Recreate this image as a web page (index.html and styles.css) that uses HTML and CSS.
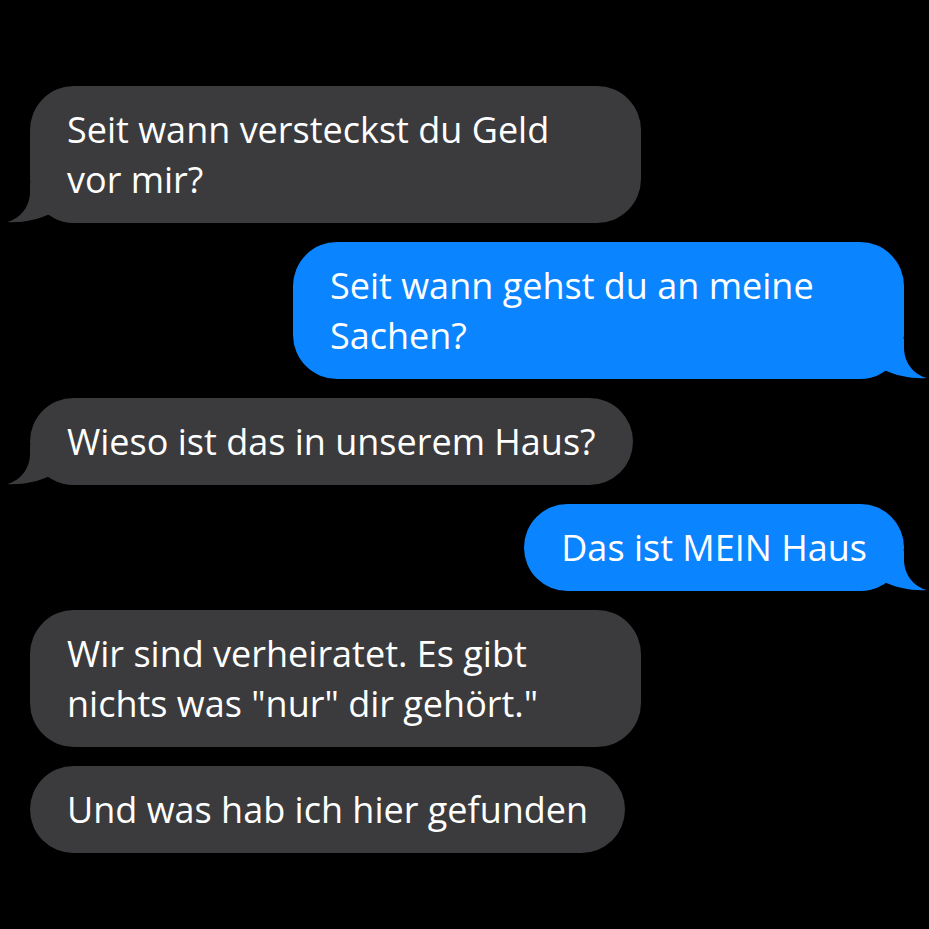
FILE: index.html
```html
<!DOCTYPE html>
<html>
<head>
    <title>Chat</title>
    <link rel="stylesheet" href="styles.css">
</head>
<body>
<div class="chat">
    <div class="msg in tail">
        Seit wann versteckst du Geld vor mir?
        <svg class="tip" viewBox="0 0 70 40"><path d="M23 0 L23 10 C22 30 6 38 0 39 C14 40 30 37 43 31 C49 37 56 40 70 40 L70 0 Z"/></svg>
    </div>
    <div class="msg out tail">
        Seit wann gehst du an meine Sachen?
        <svg class="tip" viewBox="0 0 70 40"><path d="M23 0 L23 10 C22 30 6 38 0 39 C14 40 30 37 43 31 C49 37 56 40 70 40 L70 0 Z"/></svg>
    </div>
    <div class="msg in tail">
        Wieso ist das in unserem Haus?
        <svg class="tip" viewBox="0 0 70 40"><path d="M23 0 L23 10 C22 30 6 38 0 39 C14 40 30 37 43 31 C49 37 56 40 70 40 L70 0 Z"/></svg>
    </div>
    <div class="msg out tail">
        Das ist MEIN Haus
        <svg class="tip" viewBox="0 0 70 40"><path d="M23 0 L23 10 C22 30 6 38 0 39 C14 40 30 37 43 31 C49 37 56 40 70 40 L70 0 Z"/></svg>
    </div>
    <div class="msg in">
        Wir sind verheiratet. Es gibt nichts was "nur" dir gehört."
    </div>
    <div class="msg in">
        Und was hab ich hier gefunden
    </div>
</div>
</body>
</html>
```

FILE: styles.css
```css
body {
    margin: 0;
    background-color: #000;
    font-family: "Open Sans", Arial, sans-serif;
}

.chat {
    display: flex;
    flex-direction: column;
    gap: 19px;
    padding: 86px 25px 0 30px;
}

.msg {
    position: relative;
    z-index: 0;
    max-width: 611px;
    box-sizing: border-box;
    padding: 19px 37px 18px 37px;
    border-radius: 44px;
    font-size: 36px;
    line-height: 50px;
    color: #fff;
}

.msg.in {
    align-self: flex-start;
    background-color: #3b3b3d;
}

.msg.out {
    align-self: flex-end;
    background-color: #0a84ff;
}

.tip {
    position: absolute;
    z-index: -1;
    bottom: 0;
    width: 70px;
    height: 40px;
}

.in .tip {
    left: -23px;
    fill: #3b3b3d;
}

.out .tip {
    right: -23px;
    fill: #0a84ff;
    transform: scaleX(-1);
}
```
